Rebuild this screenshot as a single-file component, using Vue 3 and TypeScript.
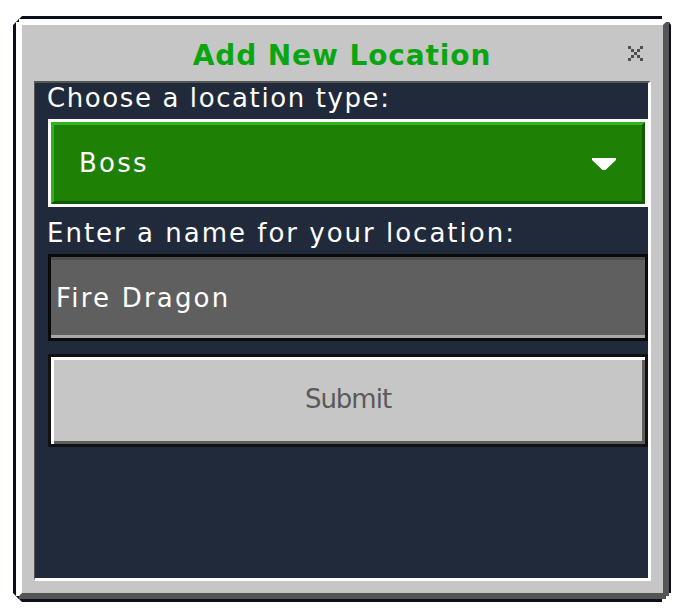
<script setup lang="ts">
import { ref } from 'vue'

const options = ['Boss']
const selected = ref(options[0])
const locationName = ref('Fire Dragon')
</script>

<template>
  <main class="stage">
    <section class="frame">
      <i class="pip tl"></i><i class="pip tr"></i><i class="pip bl"></i><i class="pip br"></i>
      <div class="bevel">
        <header class="head">
          <h1 class="title">Add New Location</h1>
          <svg class="close" viewBox="0 0 15 15" shape-rendering="crispEdges" aria-label="Close">
            <path fill="#4f4f4f" d="M0 0h3v3H0zM3 3h3v3H3zM6 6h3v3H6zM9 9h3v3H9zM12 12h3v3h-3zM12 0h3v3h-3zM9 3h3v3H9zM3 9h3v3H3zM0 12h3v3H0z" />
          </svg>
        </header>
        <div class="panel">
          <label class="label first">Choose a location type:</label>
          <div class="select">
            <div class="select-face">
              <span class="select-text">{{ selected }}</span>
              <svg class="caret" viewBox="0 0 24 12">
                <path fill="#fff" d="M0 0h24v2L13.5 12h-3L0 2z" />
              </svg>
            </div>
          </div>
          <label class="label second">Enter a name for your location:</label>
          <div class="input">
            <span class="input-text">{{ locationName }}</span>
          </div>
          <button class="submit" type="button"><span>Submit</span></button>
        </div>
      </div>
    </section>
  </main>
</template>

<style>
html, body { margin: 0; background: #fff; }
</style>

<style scoped>
.stage {
  width: 700px;
  height: 616px;
  box-sizing: border-box;
  padding: 16px 29px 14px 13px;
  font-family: "DejaVu Sans", sans-serif;
}
.frame {
  position: relative;
  box-sizing: border-box;
  height: 586px;
  padding: 3px 2px 3px 3px;
  background: #0b0f1c;
  clip-path: polygon(
    9px 0, calc(100% - 9px) 0, calc(100% - 9px) 3px, calc(100% - 5px) 3px, calc(100% - 5px) 6px,
    calc(100% - 2px) 6px, 100% 9px, 100% calc(100% - 9px), calc(100% - 2px) calc(100% - 9px),
    calc(100% - 2px) calc(100% - 6px), calc(100% - 5px) calc(100% - 6px), calc(100% - 5px) calc(100% - 3px),
    calc(100% - 9px) calc(100% - 3px), calc(100% - 9px) 100%, 9px 100%, 6px calc(100% - 3px),
    3px calc(100% - 6px), 0 calc(100% - 9px), 0 9px, 3px 6px, 6px 3px
  );
}
.pip {
  position: absolute;
  z-index: 1;
  width: 3px;
  height: 3px;
  background: #0b0f1c;
}
.tl { left: 3px; top: 3px; }
.tr { right: 2px; top: 3px; }
.bl { left: 3px; bottom: 3px; }
.br { right: 2px; bottom: 3px; }
.bevel {
  box-sizing: border-box;
  height: 100%;
  display: flex;
  flex-direction: column;
  background: #c6c6c6;
  border-style: solid;
  border-width: 6px;
  border-color: #fff #555 #555 #fff;
}
.head {
  position: relative;
  flex: 0 0 56px;
  display: flex;
  align-items: center;
  justify-content: center;
}
.title {
  margin: 6px 0 0 -1px;
  font-size: 28px;
  font-weight: 700;
  line-height: 1;
  letter-spacing: 0.9px;
  color: #0aa612;
}
.close {
  position: absolute;
  right: 20px;
  top: 21px;
  width: 15px;
  height: 15px;
}
.panel {
  flex: 1;
  margin: 0 12px 12px;
  padding-left: 13px;
  display: flex;
  flex-direction: column;
  background: #212a3a;
  border-top: 2px solid #555;
  border-left: 1px solid #555;
  border-right: 3px solid #fff;
  border-bottom: 3px solid #fff;
  box-sizing: border-box;
}
.label {
  color: #fff;
  font-size: 26px;
  line-height: 30px;
}
.first { height: 36px; margin-left: -1px; letter-spacing: 1.6px; }
.second { margin-top: 11px; height: 36px; margin-left: -1px; letter-spacing: 2px; }
.select {
  box-sizing: border-box;
  height: 88px;
  padding: 3px;
  background: #fff;
}
.select-face {
  box-sizing: border-box;
  height: 100%;
  display: flex;
  align-items: center;
  justify-content: space-between;
  padding: 0 26px 0 25px;
  background: #1f8006;
  border-style: solid;
  border-width: 3px;
  border-color: #2fb51e #0f5a02 #0f5a02 #2fb51e;
}
.select-text {
  color: #fff;
  font-size: 26px;
  line-height: 30px;
  letter-spacing: 2.2px;
}
.caret { width: 24px; height: 12px; margin-top: 2px; }
.input {
  box-sizing: border-box;
  height: 87px;
  display: flex;
  align-items: center;
  padding-left: 5px;
  background: #5f5f5f;
  border: 3px solid #0a0a0a;
  box-shadow: inset 0 3px 0 #4e4e4e, inset 0 -3px 0 #a8a8a8;
}
.input-text {
  color: #fff;
  font-size: 26px;
  line-height: 30px;
  letter-spacing: 2.2px;
}
.submit {
  box-sizing: border-box;
  height: 93px;
  margin: 13px 0 0;
  padding: 0 0 3px;
  color: #5a5a5a;
  font: 26px/30px "DejaVu Sans", sans-serif;
  letter-spacing: -1px;
  background: #c6c6c6;
  border: 3px solid #111;
  box-shadow: inset 3px 3px 0 #fff, inset -3px -3px 0 #5d5d5d;
}
</style>
